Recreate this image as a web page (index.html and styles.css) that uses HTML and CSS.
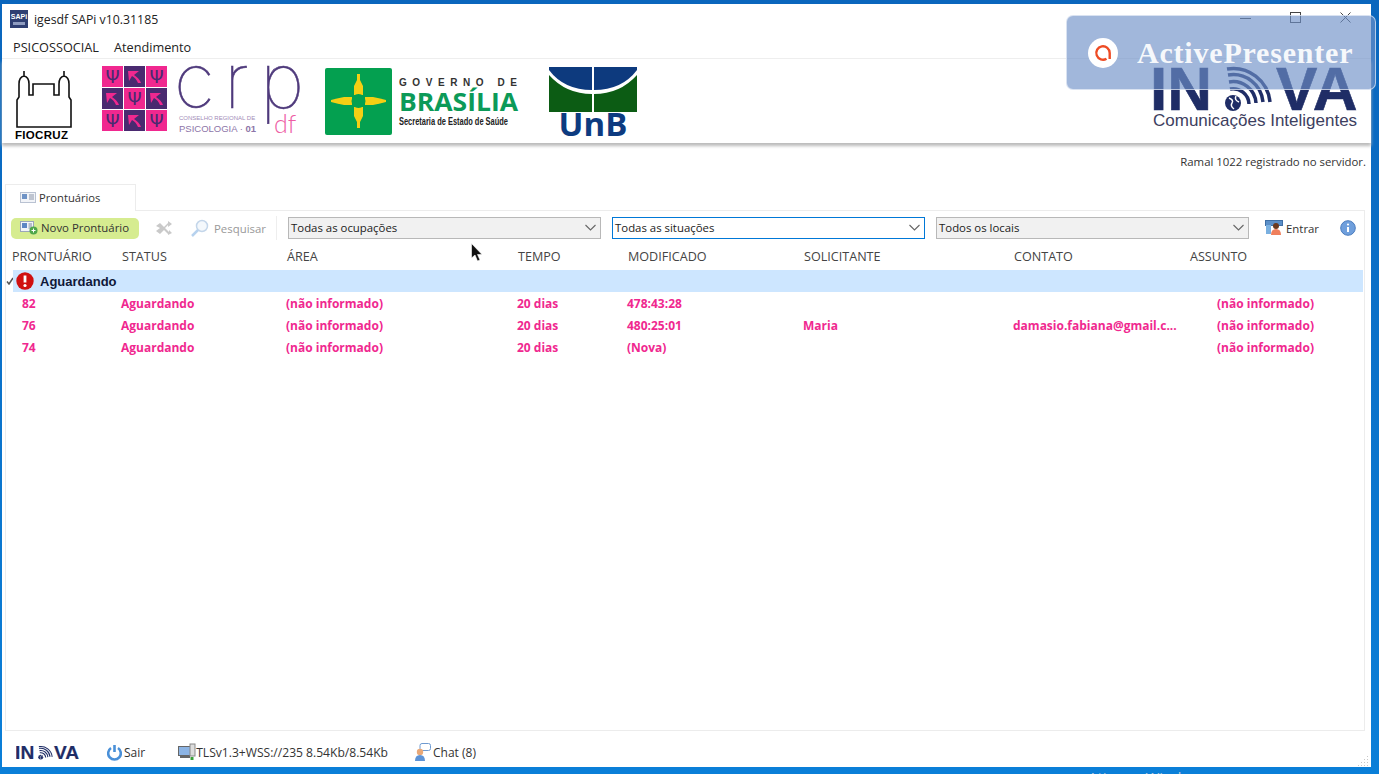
FILE: index.html
```html
<!DOCTYPE html>
<html lang="pt-BR">
<head>
    <meta charset="UTF-8">
    <meta name="viewport" content="width=device-width, initial-scale=1.0">
    <title>igesdf SAPi v10.31185</title>
    <link rel="stylesheet" href="styles.css">
</head>
<body>
    <svg class="defs" width="0" height="0">
        <symbol id="inova-mark" viewBox="1152 64 207 48">
            <text x="1149" y="110" class="inova-text">IN</text>
            <text x="1275" y="110" class="inova-text">VA</text>
            <g fill="none" stroke="#1f2d66" stroke-width="3.5">
                <path d="M1229 89A16 16 0 0 1 1248 104"/>
                <path d="M1228 82A23 23 0 0 1 1255 103"/>
                <path d="M1227 75A30 30 0 0 1 1262 102"/>
                <path d="M1226 69A37 37 0 0 1 1269 102"/>
            </g>
            <circle cx="1232" cy="103" r="8" fill="#1f2d66"/>
            <path d="M1228 98q5 2 3 5t2 6M1235 96q-2 4 3 6" fill="none" stroke="#fff" stroke-width="1.5"/>
        </symbol>
        <path id="crp-pick" d="M0 0L11 0L6 4Q11 7 13 12L10 12Q8 7 4 5L1 10Z"/>
    </svg>

    <div class="window">
        <div class="title-bar">
            <svg class="app-icon" width="18" height="18" viewBox="0 0 18 18">
                <rect width="18" height="18" fill="#2f3f72"/>
                <text x="9" y="9" class="app-icon-text">SAPi</text>
                <rect x="3" y="12" width="12" height="3" fill="#8f9cc0"/>
            </svg>
            <span>igesdf SAPi v10.31185</span>
            <div class="win-controls">
                <svg width="11" height="12" viewBox="0 0 11 12"><path d="M0 6.500H11" stroke="#444"/></svg>
                <svg width="11" height="12" viewBox="0 0 11 12"><rect x=".5" y=".5" width="10" height="10" fill="none" stroke="#444"/></svg>
                <svg width="11" height="12" viewBox="0 0 11 12"><path d="M.5 .5L10.500 10.500M10.500 .5L.5 10.500" stroke="#444"/></svg>
            </div>
        </div>

        <div class="menu-bar">
            <span>PSICOSSOCIAL</span>
            <span>Atendimento</span>
        </div>

        <div class="logo-bar">
            <svg class="logo-fiocruz" width="58" height="72" viewBox="14 68 58 72">
                <path d="M17 127V100L19 97V84Q19 77 24 76V71V76Q29 77 29 84V95H33V84H54V95H59V84Q59 77 64 76V71V76Q69 77 69 84V97L71 100V127Z" fill="#fff" stroke="#111" stroke-width="1.6"/>
                <text x="15" y="138.500" class="fiocruz-text">FIOCRUZ</text>
            </svg>

            <svg class="logo-crp" width="200" height="72" viewBox="102 64 200 72">
                <g class="crp-pink">
                    <rect x="102" y="66" width="21" height="21"/><rect x="146" y="66" width="21" height="21"/>
                    <rect x="124" y="88" width="21" height="21"/>
                    <rect x="102" y="110" width="21" height="21"/><rect x="146" y="110" width="21" height="21"/>
                </g>
                <g class="crp-purple">
                    <rect x="124" y="66" width="21" height="21"/>
                    <rect x="102" y="88" width="21" height="21"/><rect x="146" y="88" width="21" height="21"/>
                    <rect x="124" y="110" width="21" height="21"/>
                </g>
                <g class="crp-psi">
                    <text x="112.500" y="83">Ψ</text><text x="156.500" y="83">Ψ</text>
                    <text x="134.500" y="105">Ψ</text>
                    <text x="112.500" y="127">Ψ</text><text x="156.500" y="127">Ψ</text>
                </g>
                <g fill="#f0288f">
                    <use href="#crp-pick" x="128" y="71"/>
                    <use href="#crp-pick" x="106" y="93"/>
                    <use href="#crp-pick" x="150" y="93"/>
                    <use href="#crp-pick" x="128" y="115"/>
                </g>
                <text x="174 224 260" y="108" class="crp-word">crp</text>
                <text x="179" y="120" class="crp-small">CONSELHO REGIONAL DE</text>
                <text x="179" y="132" class="crp-mid">PSICOLOGIA · <tspan font-weight="700">01</tspan></text>
                <text x="274" y="133" class="crp-df">df</text>
            </svg>

            <svg class="logo-gdf" width="195" height="68" viewBox="325 67 195 68">
                <rect x="325" y="68" width="67" height="67" rx="2" fill="#04a050"/>
                <g fill="#f5cf14">
                    <path d="M357 74L360 74L360 80L363 86L363 95L354 95L354 86L357 80Z"/>
                    <path d="M357 128L360 128L360 122L363 116L363 107L354 107L354 116L357 122Z"/>
                    <path d="M331 100L337 98.500L344 97L352 97V105L344 105L337 103.500L331 102Z"/>
                    <path d="M386 100L380 98.500L373 97L365 97V105L373 105L380 103.500L386 102Z"/>
                </g>
                <circle cx="358.500" cy="101" r="7" fill="#04a050"/>
                <text x="399" y="86" class="gdf-top" textLength="118">GOVERNO DE</text>
                <text x="399" y="111" class="gdf-main" textLength="119" lengthAdjust="spacingAndGlyphs">BRASÍLIA</text>
                <text x="399" y="125" class="gdf-sub" textLength="109" lengthAdjust="spacingAndGlyphs">Secretaria de Estado de Saúde</text>
            </svg>

            <svg class="logo-unb" width="90" height="72" viewBox="549 66 90 72">
                <path d="M549 67H592V90Q564 90 549 70Z" fill="#0d3a7e"/>
                <path d="M594 67H637V70Q622 90 594 90Z" fill="#0d3a7e"/>
                <path d="M549 75Q566 94 592 94V112H549Z" fill="#0c5c14"/>
                <path d="M637 75Q620 94 594 94V112H637Z" fill="#0c5c14"/>
                <text x="593" y="136" class="unb-text">UnB</text>
            </svg>

            <div class="logo-inova">
                <svg width="207" height="48"><use href="#inova-mark"/></svg>
                <span>Comunicações Inteligentes</span>
            </div>
        </div>

        <div class="status-line">Ramal 1022 registrado no servidor.</div>

        <div class="tab-strip">
            <div class="tab">
                <svg width="16" height="12" viewBox="0 0 16 12">
                    <rect x=".5" y=".5" width="15" height="10" fill="#f2f4f8" stroke="#b9c2d2"/>
                    <rect x="2" y="2" width="5" height="5" fill="#6f93c6"/>
                    <path d="M9 3H14M9 5H14M9 7H14" stroke="#8a94a8"/>
                </svg>
                <span>Prontuários</span>
            </div>
        </div>

        <div class="panel">
            <div class="toolbar">
                <button class="btn-new">
                    <svg width="18" height="15" viewBox="0 0 18 15">
                        <rect x=".5" y="1.500" width="13" height="10" fill="#f2f4f8" stroke="#9aa6ba"/>
                        <rect x="2" y="3" width="5" height="5" fill="#5d86c4"/>
                        <path d="M8.500 4H12M8.500 6H12M8.500 8H12" stroke="#7a869c"/>
                        <circle cx="13.500" cy="10.500" r="4" fill="#4ea64a"/>
                        <path d="M11.500 10.500H15.500M13.500 8.500V12.500" stroke="#fff"/>
                    </svg>
                    Novo Prontuário
                </button>
                <svg class="tool-shuffle" width="18" height="16" viewBox="0 0 18 16">
                    <path d="M1 6L5 3L9 7L13 3V1L17 4L13 7V5L10 8L14 12V10L17 13L13 15V14L9 10L5 14L1 11L5 8Z" fill="#c9c9c9"/>
                </svg>
                <div class="tool-search">
                    <svg width="20" height="20" viewBox="0 0 20 20">
                        <circle cx="12" cy="8" r="5.500" fill="#f4f8fc" stroke="#c4d6ea" stroke-width="1.500"/>
                        <path d="M8 12L2 18" stroke="#b7d2ee" stroke-width="2.500"/>
                    </svg>
                    <span>Pesquisar</span>
                </div>
                <div class="combo">
                    <span>Todas as ocupações</span>
                    <svg width="11" height="7" viewBox="0 0 11 7"><path d="M.5 1L5.500 6L10.500 1" fill="none" stroke="#666" stroke-width="1.100"/></svg>
                </div>
                <div class="combo combo-focus">
                    <span>Todas as situações</span>
                    <svg width="11" height="7" viewBox="0 0 11 7"><path d="M.5 1L5.500 6L10.500 1" fill="none" stroke="#666" stroke-width="1.100"/></svg>
                </div>
                <div class="combo">
                    <span>Todos os locais</span>
                    <svg width="11" height="7" viewBox="0 0 11 7"><path d="M.5 1L5.500 6L10.500 1" fill="none" stroke="#666" stroke-width="1.100"/></svg>
                </div>
                <div class="tool-enter">
                    <svg width="18" height="16" viewBox="0 0 18 16">
                        <rect x=".5" y=".5" width="17" height="5" fill="#5b8fc8" stroke="#3f6fa5"/>
                        <rect x="1" y="5" width="5" height="9" fill="#7ab0e0"/>
                        <circle cx="11" cy="6" r="3" fill="#6b3a20"/>
                        <path d="M6 15Q6 9 11 9T16 15Z" fill="#ef7f5c"/>
                    </svg>
                    <span>Entrar</span>
                </div>
                <svg class="tool-info" width="16" height="16" viewBox="0 0 16 16">
                    <circle cx="8" cy="8" r="7.300" fill="#6f9fdc" stroke="#4a7cbe"/>
                    <circle cx="8" cy="4.500" r="1.100" fill="#fff"/>
                    <path d="M8 7V12" stroke="#fff" stroke-width="2"/>
                </svg>
            </div>

            <div class="grid-head">
                <div>PRONTUÁRIO</div>
                <div>STATUS</div>
                <div>ÁREA</div>
                <div>TEMPO</div>
                <div>MODIFICADO</div>
                <div>SOLICITANTE</div>
                <div>CONTATO</div>
                <div>ASSUNTO</div>
            </div>

            <div class="group-row">
                <svg class="group-check" width="8" height="8" viewBox="0 0 8 8"><path d="M1 4.500L3 7L7 1" fill="none" stroke="#555" stroke-width="1.500"/></svg>
                <div class="group-label">
                    <svg width="18" height="18" viewBox="0 0 18 18">
                        <circle cx="9" cy="9" r="8.700" fill="#d01010"/>
                        <path d="M9 3.500V10.500" stroke="#fff" stroke-width="2.800"/>
                        <circle cx="9" cy="13.500" r="1.600" fill="#fff"/>
                    </svg>
                    <span>Aguardando</span>
                </div>
            </div>

            <div class="grid-row">
                <div>82</div><div>Aguardando</div><div>(não informado)</div><div>20 dias</div><div>478:43:28</div><div></div><div></div><div>(não informado)</div>
            </div>
            <div class="grid-row">
                <div>76</div><div>Aguardando</div><div>(não informado)</div><div>20 dias</div><div>480:25:01</div><div>Maria</div><div>damasio.fabiana@gmail.c...</div><div>(não informado)</div>
            </div>
            <div class="grid-row">
                <div>74</div><div>Aguardando</div><div>(não informado)</div><div>20 dias</div><div>(Nova)</div><div></div><div></div><div>(não informado)</div>
            </div>
        </div>

        <div class="footer">
            <svg class="footer-inova" width="64" height="15"><use href="#inova-mark"/></svg>
            <div class="footer-item footer-exit">
                <svg width="15" height="17" viewBox="0 0 15 17">
                    <path d="M4 4A6.300 6.300 0 1 0 11 4" fill="none" stroke="#4a90d8" stroke-width="2.600"/>
                    <path d="M7.500 1V8" stroke="#4a90d8" stroke-width="2.600"/>
                </svg>
                <span>Sair</span>
            </div>
            <div class="footer-item footer-net">
                <svg width="18" height="18" viewBox="0 0 18 18">
                    <rect x=".5" y="3.500" width="12" height="9" fill="#8cb4e4" stroke="#666"/>
                    <rect x="12" y="1" width="5" height="12" fill="#ddd" stroke="#888"/>
                    <path d="M2 14H12" stroke="#666" stroke-width="2"/>
                    <path d="M14 14V17" stroke="#3aa03a" stroke-width="3"/>
                </svg>
                <span>TLSv1.3+WSS://235 8.54Kb/8.54Kb</span>
            </div>
            <div class="footer-item footer-chat">
                <svg width="17" height="19" viewBox="0 0 17 19">
                    <rect x="6" y=".5" width="10.500" height="7" rx="2" fill="#fff" stroke="#6e9ad0"/>
                    <circle cx="6" cy="9" r="3.200" fill="#e8a878"/>
                    <path d="M1 18Q1 12 6 12T11 18Z" fill="#5d93d6"/>
                </svg>
                <span>Chat (8)</span>
            </div>
            <svg class="resize-grip" width="11" height="11" viewBox="0 0 11 11">
                <path d="M9 1h1v1H9zM9 4h1v1H9zM6 4h1v1H6zM9 7h1v1H9zM6 7h1v1H6zM3 7h1v1H3zM9 10h1v1H9zM6 10h1v1H6zM3 10h1v1H3zM0 10h1v1H0z" fill="#c8c8c8"/>
            </svg>
        </div>
    </div>

    <div class="watermark">
        <svg width="30" height="30" viewBox="0 0 30 30">
            <circle cx="15" cy="15" r="15" fill="#fff"/>
            <path d="M18.500 20.700A6.700 6.700 0 1 1 21.700 15V21" fill="none" stroke="#ee4b24" stroke-width="2.400"/>
        </svg>
        <span>ActivePresenter</span>
    </div>

    <svg class="cursor" width="12" height="20" viewBox="0 0 12 20">
        <path d="M.5 .5V15L4 12L6.500 18L9 17L6.500 11.500H11Z" fill="#111" stroke="#fff" stroke-width=".6"/>
    </svg>

    <div class="desktop-note">Ativar o Windows</div>
</body>
</html>
```

FILE: styles.css
```css
* {
    box-sizing: border-box;
}
body {
    font-family: "Open Sans", "Noto Sans", sans-serif;
    font-size: 12px;
    color: #333;
    margin: 0;
    height: 774px;
    padding: 4px 8px 7px 2px;
    overflow: hidden;
    background: linear-gradient(#0a66bd, #0a7fd8);
    position: relative;
}
.defs {
    position: absolute;
}
.window {
    height: 100%;
    display: flex;
    flex-direction: column;
    background-color: #fff;
}

/* barra de titulo e menu */
.title-bar {
    height: 30px;
    flex: none;
    display: flex;
    align-items: center;
    padding-left: 8px;
    gap: 6px;
    color: #222;
    font-size: 12.300px;
}
.app-icon-text {
    font: 700 7px "Liberation Sans", sans-serif;
    fill: #fff;
    text-anchor: middle;
}
.win-controls {
    margin-left: auto;
    margin-right: 20px;
    margin-top: -3px;
    display: flex;
    gap: 39px;
}
.menu-bar {
    height: 25px;
    flex: none;
    display: flex;
    align-items: center;
    gap: 15px;
    padding: 2px 0 0 11px;
    border-bottom: 1px solid #eee;
    color: #222;
    font-size: 12.700px;
}

/* logos */
.logo-bar {
    height: 84px;
    flex: none;
    display: flex;
    align-items: flex-start;
    box-shadow: 0 3px 3px #bbb;
    position: relative;
}
.logo-fiocruz {
    margin: 9px 0 0 12px;
}
.logo-crp {
    margin: 5px 0 0 30px;
}
.logo-gdf {
    margin: 8px 0 0 23px;
}
.logo-unb {
    margin: 7px 0 0 29px;
}
.logo-inova {
    margin: 5px 11px 0 auto;
    display: flex;
    flex-direction: column;
    color: #3d4060;
    font: 17px "Liberation Sans", sans-serif;
}
.logo-inova svg {
    display: block;
}
.logo-inova span {
    margin-top: -1px;
    white-space: nowrap;
}
.inova-text {
    font: 700 62px "Liberation Sans", sans-serif;
    fill: #1f2d66;
    stroke: #1f2d66;
    stroke-width: .6px;
}
.fiocruz-text {
    font: 700 11.500px "Liberation Sans", sans-serif;
    letter-spacing: .3px;
}
.crp-pink {
    fill: #f0288f;
}
.crp-purple {
    fill: #4a2a70;
}
.crp-psi text {
    font: 400 18px "DejaVu Sans", sans-serif;
    fill: #4a2a70;
    text-anchor: middle;
}
.crp-word {
    font: 100 76px Inter, sans-serif;
    fill: #4f3a7c;
    stroke: #4f3a7c;
    stroke-width: .5px;
}
.crp-small {
    font: 6px "Liberation Sans", sans-serif;
    fill: #a28cb8;
}
.crp-mid {
    font: 9.500px "Liberation Sans", sans-serif;
    fill: #8d75a8;
}
.crp-df {
    font: 300 25px Lato, sans-serif;
    fill: #ee5ea4;
}
.gdf-top {
    font: 700 10px "Liberation Sans", sans-serif;
    fill: #333;
}
.gdf-main {
    font: 700 25px "Open Sans", sans-serif;
    fill: #0c9a58;
}
.gdf-sub {
    font: 700 11px "Liberation Sans", sans-serif;
    fill: #222;
}
.unb-text {
    font: 700 33px "Open Sans", sans-serif;
    fill: #0d3b80;
    text-anchor: middle;
}

/* linha de estado e aba */
.status-line {
    height: 41px;
    flex: none;
    padding: 11px 5px 0 0;
    text-align: right;
    font-size: 11.400px;
}
.tab-strip {
    flex: none;
    height: 26px;
    padding-left: 3px;
}
.tab {
    width: 131px;
    height: 27px;
    display: flex;
    align-items: center;
    gap: 3px;
    padding: 0 0 1px 14px;
    border: 1px solid #ececec;
    border-bottom: none;
    background-color: #fff;
    position: relative;
    font-size: 11.200px;
}

/* painel com a grade */
.panel {
    flex: 1;
    margin: 0 6px 0 3px;
    border: 1px solid #ececec;
}
.toolbar {
    height: 22px;
    margin-top: 6px;
    display: flex;
    align-items: center;
    font-size: 11.400px;
}
.btn-new {
    width: 128px;
    height: 21px;
    margin-left: 5px;
    display: flex;
    align-items: center;
    gap: 3px;
    padding: 0 0 1px 9px;
    border: none;
    border-radius: 5px;
    background-color: #d6ec90;
    font: inherit;
    color: #333;
    white-space: nowrap;
}
.tool-shuffle {
    margin-left: 16px;
}
.tool-search {
    width: 87px;
    height: 24px;
    margin-left: 17px;
    display: flex;
    align-items: center;
    gap: 4px;
    border-right: 1px solid #eee;
    color: #999;
}
.combo {
    width: 313px;
    height: 22px;
    margin-left: 11px;
    display: flex;
    align-items: center;
    justify-content: space-between;
    padding: 0 4px 1px 2px;
    border: 1px solid #b8b8b8;
    background-color: #f1f1f1;
    color: #222;
}
.combo-focus {
    border-color: #0078d7;
    background-color: #fff;
}
.tool-enter {
    margin-left: 16px;
    display: flex;
    align-items: center;
    gap: 3px;
}
.tool-info {
    margin-left: 21px;
}
.grid-head,
.grid-row {
    display: grid;
    grid-template-columns: 110px 165px 231px 110px 176px 210px 176px 1fr;
    padding-left: 6px;
    white-space: nowrap;
}
.grid-head {
    height: 27px;
    margin-top: 4px;
    align-items: center;
    color: #444;
    font-size: 12.600px;
}
.group-row {
    height: 22px;
    display: flex;
    align-items: center;
    margin-right: 1px;
}
.group-check {
    margin-right: -1px;
    flex: none;
}
.group-label {
    flex: 1;
    height: 100%;
    display: flex;
    align-items: center;
    gap: 6px;
    padding-left: 3px;
    background-color: #cde6ff;
    font: 700 13px "Liberation Sans", sans-serif;
    color: #101838;
}
.grid-row {
    height: 22px;
    align-items: center;
    color: #f0288f;
    font-weight: 700;
}
.grid-row div {
    margin-left: -1px;
}
.grid-row div:first-child {
    margin-left: 10px;
}
.grid-row div:last-child {
    margin-left: 27px;
}

/* rodape */
.footer {
    height: 36px;
    flex: none;
    display: flex;
    align-items: center;
    padding: 6px 0 0 14px;
    position: relative;
}
.footer-item {
    display: flex;
    align-items: center;
    gap: 1px;
}
.footer-exit {
    margin-left: 27px;
    gap: 2px;
}
.footer-net {
    margin-left: 33px;
    gap: 0;
    font-size: 12.100px;
}
.footer-chat {
    margin-left: 26px;
    gap: 2px;
}
.resize-grip {
    position: absolute;
    right: 2px;
    bottom: 1px;
}

/* sobreposicoes */
.watermark {
    position: absolute;
    left: 1066px;
    top: 15px;
    width: 310px;
    height: 75px;
    display: flex;
    align-items: center;
    gap: 19px;
    padding-left: 21px;
    border: 1px solid rgba(255, 255, 255, .6);
    border-radius: 7px;
    background-color: rgba(110, 145, 200, .65);
    color: rgba(255, 255, 255, .92);
    font: 700 30px "Liberation Serif", serif;
    letter-spacing: .8px;
}
.cursor {
    position: absolute;
    left: 471px;
    top: 243px;
}
.desktop-note {
    position: absolute;
    left: 1088px;
    top: 767px;
    color: #b7c9dc;
    font-size: 15px;
}
```
